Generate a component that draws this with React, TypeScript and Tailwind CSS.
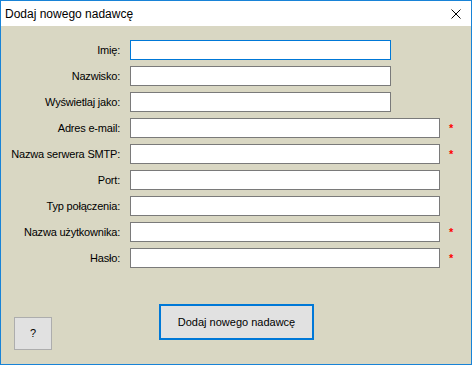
const fields = [
  { label: "Imię:", wide: false, required: false, focused: true },
  { label: "Nazwisko:", wide: false, required: false },
  { label: "Wyświetlaj jako:", wide: false, required: false },
  { label: "Adres e-mail:", wide: true, required: true },
  { label: "Nazwa serwera SMTP:", wide: true, required: true },
  { label: "Port:", wide: true, required: false },
  { label: "Typ połączenia:", wide: true, required: false },
  { label: "Nazwa użytkownika:", wide: true, required: true },
  { label: "Hasło:", wide: true, required: true },
];

export default function App() {
  return (
    <div
      className="w-[472px] h-[365px] flex flex-col border border-[#1883d7] bg-[#d9d7c3] text-black"
      style={{ fontFamily: '"Liberation Sans", Arial, sans-serif' }}
    >
      {/* title bar */}
      <div className="h-[25px] bg-white flex items-center justify-between pl-[4px] pr-[10px] shrink-0">
        <span className="text-[12px]">Dodaj nowego nadawcę</span>
        <svg width="10" height="10" viewBox="0 0 10 10">
          <path d="M0.5 0.5 L9.5 9.5 M9.5 0.5 L0.5 9.5" stroke="#000" strokeWidth="1" />
        </svg>
      </div>

      {/* form */}
      <div className="flex flex-col gap-[6px] pt-[14px]">
        {fields.map((f) => (
          <div key={f.label} className="flex items-center h-[20px]">
            <label className="w-[119px] text-right text-[11px] tracking-[-0.2px] leading-[20px]">
              {f.label}
            </label>
            <input
              type="text"
              className={`ml-[10px] h-[20px] bg-white border outline-none ${
                f.wide ? "w-[310px]" : "w-[261px]"
              } ${f.focused ? "border-[#0078d7]" : "border-[#7a7a7a]"}`}
            />
            {f.required && (
              <span className="ml-[9px] text-[11px] font-bold text-[#ff0000] leading-[20px]">*</span>
            )}
          </div>
        ))}
      </div>

      {/* buttons */}
      <div className="flex items-start mt-[36px]">
        <button className="ml-[13px] mt-[13px] w-[38px] h-[33px] bg-[#e1e1e1] border border-[#adadad] text-[11px]">
          ?
        </button>
        <button className="ml-[107px] w-[155px] h-[36px] bg-[#e1e1e1] border-2 border-[#0078d7] text-[11px]">
          Dodaj nowego nadawcę
        </button>
      </div>
    </div>
  );
}
